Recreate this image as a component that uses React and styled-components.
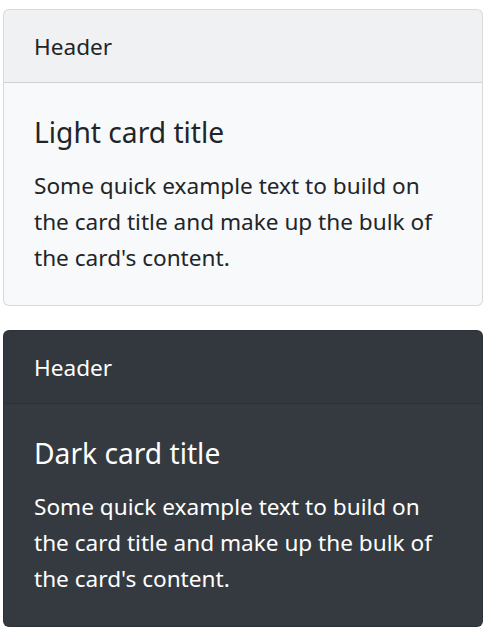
import styled, { createGlobalStyle } from "styled-components";

const GlobalStyle = createGlobalStyle`
  body {
    margin: 0;
    font-family: "Noto Sans", "Open Sans", sans-serif;
    color: #212529;
    background: #fff;
  }
`;

const Page = styled.div`
  padding: 9px 5px 0 3px;
`;

const Card = styled.div`
  display: flex;
  flex-direction: column;
  width: 480px;
  margin-bottom: 24px;
  border: 1px solid rgba(0, 0, 0, 0.125);
  border-radius: 6px;
  background: ${(p) => (p.$dark ? "#343a40" : "#f8f9fa")};
  color: ${(p) => (p.$dark ? "#fff" : "#212529")};
  overflow: hidden;
  box-sizing: border-box;
`;

const CardHeader = styled.div`
  padding: 19px 30px 17px;
  font-size: 22.6px;
  line-height: 36px;
  background: rgba(0, 0, 0, 0.03);
  border-bottom: 1px solid rgba(0, 0, 0, 0.125);
`;

const CardBody = styled.div`
  padding: 31px 30px 29px;
`;

const Title = styled.h5`
  margin: 0 0 18px;
  font-size: 28.2px;
  font-weight: 400;
  line-height: 36px;
`;

const Text = styled.p`
  margin: 0;
  font-size: 22.6px;
  line-height: 36px;
`;

const text =
  "Some quick example text to build on the card title and make up the bulk of the card's content.";

const Panel = ({ dark, title }) => (
  <Card $dark={dark}>
    <CardHeader>Header</CardHeader>
    <CardBody>
      <Title>{title}</Title>
      <Text>{text}</Text>
    </CardBody>
  </Card>
);

export default function App() {
  return (
    <Page>
      <GlobalStyle />
      <Panel title="Light card title" />
      <Panel dark title="Dark card title" />
    </Page>
  );
}
